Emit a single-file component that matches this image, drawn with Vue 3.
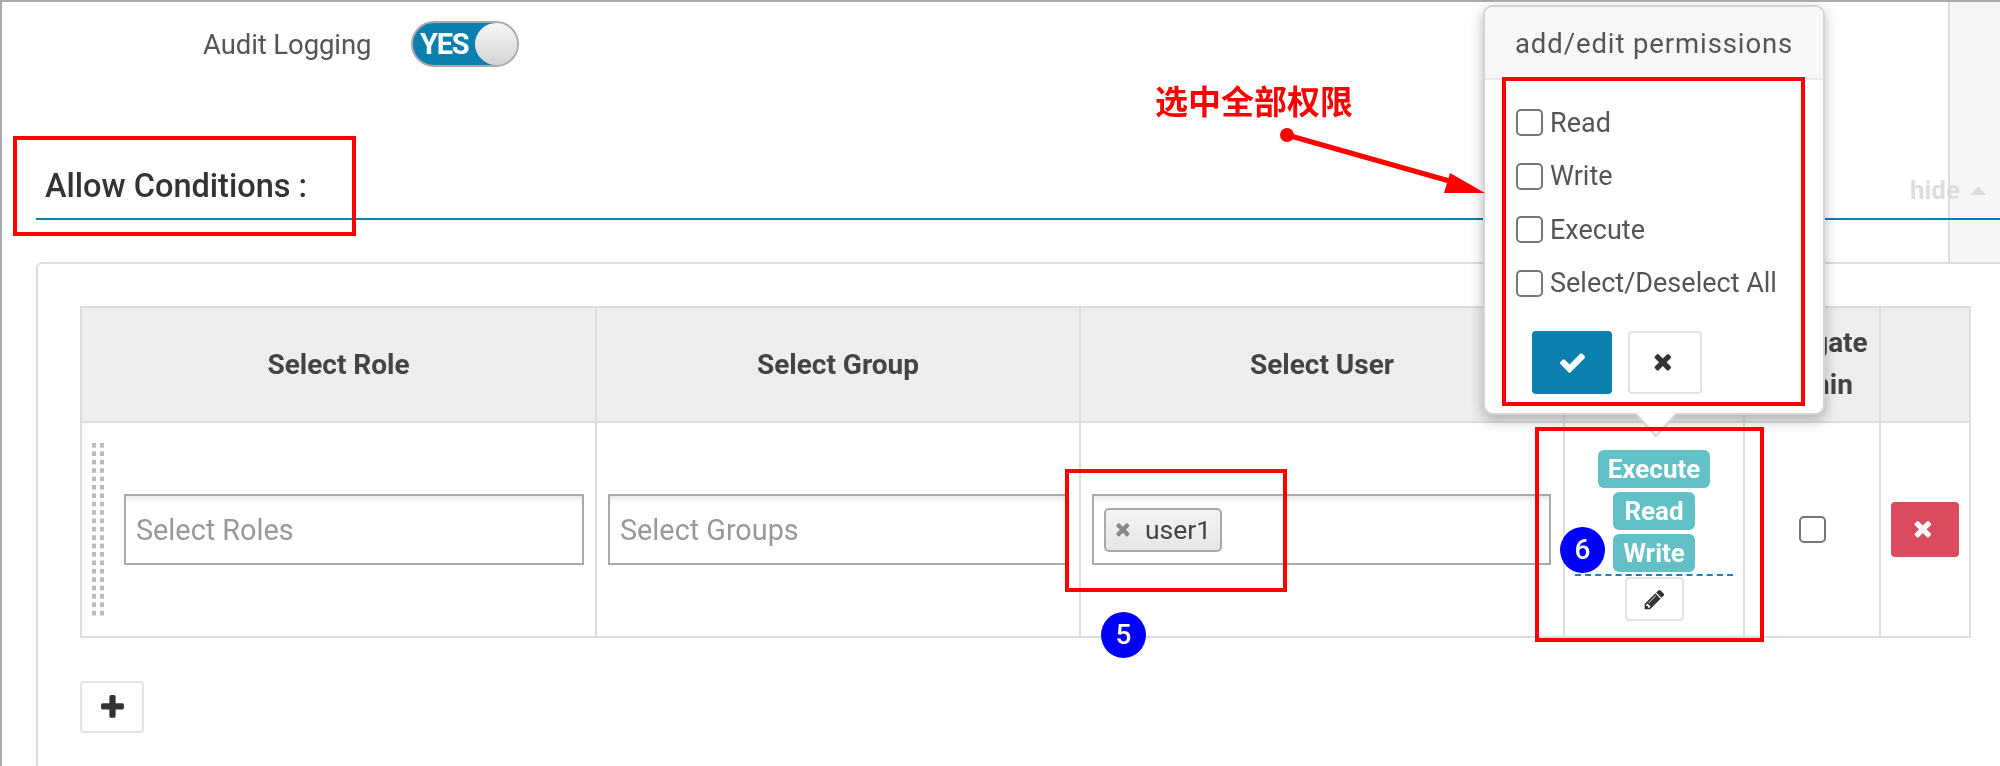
<script setup>
const icons = {
  check: 'M1671 566q0 40-28 68l-724 724-136 136q-28 28-68 28t-68-28l-136-136-362-362q-28-28-28-68t28-68l136-136q28-28 68-28t68 28l294 295 656-657q28-28 68-28t68 28l136 136q28 28 28 68z',
  times: 'M1298 1242q0 40-28 68l-136 136q-28 28-68 28t-68-28l-294-294-294 294q-28 28-68 28t-68-28l-136-136q-28-28-28-68t28-68l294-294-294-294q-28-28-28-68t28-68l136-136q28-28 68-28t68 28l294 294 294-294q28-28 68-28t68 28l136 136q28 28 28 68t-28 68l-294 294 294 294q28 28 28 68z',
  plus: 'M1600 736v192q0 40-28 68t-68 28h-416v416q0 40-28 68t-68 28h-192q-40 0-68-28t-28-68v-416h-416q-40 0-68-28t-28-68v-192q0-40 28-68t68-28h416v-416q0-40 28-68t68-28h192q40 0 68 28t28 68v416h416q40 0 68 28t28 68z',
  pencil: 'M491 1536l91-91-235-235-91 91v107h128v128h107zm523-928q0-22-22-22-10 0-17 7l-542 542q-7 7-7 17 0 22 22 22 10 0 17-7l542-542q7-7 7-17zm-54-192l416 416-832 832h-416v-416zm683 96q0 53-37 90l-166 166-416-416 166-165q36-38 90-38 53 0 91 38l235 234q37 39 37 91z'
}
const perms = ['Read', 'Write', 'Execute', 'Select/Deselect All']
const badges = ['Execute', 'Read', 'Write']
const marks = [
  { x: 13, y: 136, w: 343, h: 100 },
  { x: 1502, y: 77, w: 303, h: 329 },
  { x: 1065, y: 469, w: 222, h: 123 },
  { x: 1535, y: 427, w: 229, h: 215 }
]
const steps = [
  { n: 5, x: 1101, y: 612 },
  { n: 6, x: 1560, y: 527 }
]
const box = m => ({ left: m.x + 'px', top: m.y + 'px', width: m.w + 'px', height: m.h + 'px' })
const pin = s => ({ left: s.x + 'px', top: s.y + 'px' })
</script>

<template>
  <div class="page">
    <div class="strip"></div>

    <div class="audit">
      <span class="audit-label">Audit Logging</span>
      <div class="toggle"><span class="toggle-text">YES</span><span class="knob"></span></div>
    </div>

    <div class="heading">
      <h2>Allow Conditions :</h2>
      <span class="hide">hide <i class="caret"></i></span>
    </div>

    <div class="card">
      <div class="table">
        <div class="th">Select Role</div>
        <div class="th">Select Group</div>
        <div class="th">Select User</div>
        <div class="th">Permissions</div>
        <div class="th two">Delegate<br />Admin</div>
        <div class="th"></div>

        <div class="td first">
          <div class="handle"></div>
          <div class="field placeholder">Select Roles</div>
        </div>
        <div class="td second">
          <div class="field placeholder">Select Groups</div>
        </div>
        <div class="td third">
          <div class="field">
            <span class="chip">
              <svg class="chip-x" viewBox="0 0 1792 1792"><path :d="icons.times" /></svg>
              user1
            </span>
          </div>
        </div>
        <div class="td perms">
          <span v-for="b in badges" :key="b" class="badge">{{ b }}</span>
          <div class="dash"></div>
          <button class="btn edit">
            <svg class="ico-sm" viewBox="0 0 1792 1792"><path :d="icons.pencil" /></svg>
          </button>
        </div>
        <div class="td center"><input type="checkbox" class="cb" /></div>
        <div class="td center">
          <button class="btn remove">
            <svg class="ico-md" viewBox="0 0 1792 1792"><path :d="icons.times" /></svg>
          </button>
        </div>
      </div>

      <button class="btn add">
        <svg class="ico-lg" viewBox="0 0 1792 1792"><path :d="icons.plus" /></svg>
      </button>
    </div>

    <div class="popover">
      <div class="pop-title">add/edit permissions</div>
      <div class="pop-body">
        <label v-for="p in perms" :key="p" class="perm">
          <input type="checkbox" class="cb" />
          <span>{{ p }}</span>
        </label>
        <div class="pop-actions">
          <button class="btn ok">
            <svg class="ico-lg" viewBox="0 0 1792 1792"><path :d="icons.check" /></svg>
          </button>
          <button class="btn cancel">
            <svg class="ico-md" viewBox="0 0 1792 1792"><path :d="icons.times" /></svg>
          </button>
        </div>
      </div>
      <svg class="pop-arrow" viewBox="0 0 44 24" width="44" height="24">
        <path d="M1 0 L22 23 L43 0" fill="#fff" stroke="#d4d4d4" stroke-width="2" />
      </svg>
    </div>

    <div class="note">选中全部权限</div>
    <svg class="pointer" width="2000" height="766" viewBox="0 0 2000 766">
      <circle cx="1287" cy="135" r="7" fill="#f00" />
      <line x1="1287" y1="135" x2="1460" y2="184" stroke="#f00" stroke-width="5" />
      <path d="M1485 193 L1450 173 L1444 193 Z" fill="#f00" />
    </svg>

    <div v-for="(m, i) in marks" :key="i" class="mark" :style="box(m)"></div>
    <div v-for="s in steps" :key="s.n" class="step" :style="pin(s)">{{ s.n }}</div>
  </div>
</template>

<style scoped>
.page {
  position: relative;
  isolation: isolate;
  width: 2000px;
  height: 766px;
  box-sizing: border-box;
  overflow: hidden;
  background: #fff;
  border-top: 2px solid #aaa;
  border-left: 2px solid #aaa;
  padding-left: 34px;
  font-family: Roboto, "Liberation Sans", sans-serif;
  color: #444;
  filter: blur(.45px);
}
.strip {
  position: absolute;
  z-index: -1;
  left: 1946px;
  top: 0;
  width: 52px;
  height: 260px;
  background: #f6f6f6;
  border-left: 2px solid #ddd;
}
.audit {
  display: flex;
  align-items: center;
  height: 46px;
  margin-top: 19px;
  padding-left: 167px;
}
.audit-label {
  width: 208px;
  font-size: 27.5px;
  letter-spacing: -.1px;
  color: #555;
}
.toggle {
  display: flex;
  align-items: center;
  justify-content: space-between;
  box-sizing: border-box;
  width: 108px;
  height: 46px;
  border: 2px solid #aaa;
  border-radius: 23px;
  background: linear-gradient(to right, #0b7fad 80%, #ddd 80%);
}
.toggle-text {
  padding-left: 7px;
  color: #fff;
  font-weight: 700;
  font-size: 29px;
  letter-spacing: -1.2px;
}
.knob {
  width: 42px;
  height: 42px;
  border-radius: 50%;
  background: linear-gradient(to bottom, #f6f6f6, #d4d4d4);
}
.heading {
  display: flex;
  justify-content: space-between;
  align-items: center;
  box-sizing: border-box;
  height: 70px;
  margin-top: 83px;
  padding: 4px 14px 0 9px;
  border-bottom: 2px solid #0b7fad;
}
.heading h2 {
  margin: 0;
  font-size: 32.5px;
  font-weight: 500;
  color: #333;
  line-height: 64px;
}
.hide {
  margin-top: 8px;
  display: flex;
  align-items: center;
  gap: 10px;
  font-size: 26px;
  font-weight: 700;
  color: #ddd;
}
.caret {
  width: 0;
  height: 0;
  border-left: 8px solid transparent;
  border-right: 8px solid transparent;
  border-bottom: 9px solid #ddd;
}
.card {
  margin-top: 42px;
  padding: 42px 0 60px 42px;
  border: 2px solid #ddd;
  border-right: 0;
  border-bottom: 0;
  border-top-left-radius: 6px;
}
.table {
  display: grid;
  grid-template-columns: 515px 484px 484px 180px 136px 90px;
  grid-template-rows: 115px 215px;
  width: 1891px;
  box-sizing: border-box;
  border-top: 2px solid #ddd;
  border-left: 2px solid #ddd;
}
.th, .td {
  box-sizing: border-box;
  border-right: 2px solid #ddd;
  border-bottom: 2px solid #ddd;
}
.th {
  display: flex;
  align-items: center;
  justify-content: center;
  text-align: center;
  background: #eee;
  font-size: 28px;
  font-weight: 700;
  color: #444;
  padding-bottom: 1px;
}
.th.two { line-height: 42px; }
.td {
  display: flex;
  align-items: center;
}
.first { padding: 0 11px 0 10px; gap: 19px; }
.second { padding: 0 10px 0 11px; }
.third { padding: 0 12px 0 11px; }
.center { justify-content: center; }
.handle {
  flex: none;
  width: 13px;
  height: 173px;
  background-image: linear-gradient(to right, #bbb 4px, transparent 4px);
  background-size: 8px 100%;
  -webkit-mask-image: linear-gradient(to bottom, #000 50%, transparent 50%);
  mask-image: linear-gradient(to bottom, #000 50%, transparent 50%);
  -webkit-mask-size: 100% 8.4px;
  mask-size: 100% 8.4px;
}
.field {
  flex: 1;
  display: flex;
  align-items: center;
  box-sizing: border-box;
  height: 71px;
  padding: 0 10px;
  border: 2px solid #aaa;
  box-shadow: inset 0 8px 6px -6px #e2e2e2;
  font-size: 28.8px;
}
.placeholder { color: #999; }
.chip {
  display: flex;
  align-items: center;
  box-sizing: border-box;
  width: 118px;
  height: 44px;
  padding-left: 9px;
  gap: 10px;
  border: 2px solid #aaa;
  border-radius: 5px;
  background: linear-gradient(to bottom, #f4f4f4, #e6e6e6);
  color: #444;
  font-size: 26.5px;
}
.chip-x { width: 20px; height: 20px; fill: #888; }
.perms {
  flex-direction: column;
  gap: 4px;
  padding-top: 27px;
}
.badge {
  box-sizing: border-box;
  display: flex;
  align-items: center;
  justify-content: center;
  height: 38px;
  min-width: 82px;
  padding: 0 10px;
  border-radius: 6px;
  background: #62c0c7;
  color: #fff;
  font-size: 26px;
  font-weight: 700;
}
.dash {
  width: 158px;
  margin-top: -2px;
  border-top: 2px dashed #0b86c9;
}
.btn {
  display: flex;
  align-items: center;
  justify-content: center;
  box-sizing: border-box;
  padding: 0;
  border: 2px solid #e2e2e2;
  border-radius: 4px;
  background: #fff;
  fill: #333;
}
.edit { width: 59px; height: 44px; margin-top: -3px; }
.remove {
  width: 68px;
  height: 55px;
  background: #dc4a5f;
  border-color: #dc4a5f;
  fill: #fff;
}
.add { width: 64px; height: 52px; margin-top: 43px; }
.ico-sm { width: 23px; height: 23px; }
.ico-md { width: 25px; height: 25px; }
.ico-lg { width: 29px; height: 29px; }
.cb {
  appearance: none;
  flex: none;
  box-sizing: border-box;
  width: 27px;
  height: 27px;
  margin: 0;
  background: #fff;
  border: 2px solid #767676;
  border-radius: 5px;
}
.popover {
  position: absolute;
  z-index: 2;
  left: 1481px;
  top: 3px;
  box-sizing: border-box;
  width: 342px;
  height: 410px;
  background: #fff;
  border: 2px solid #d4d4d4;
  border-radius: 10px;
  box-shadow: 0 5px 14px rgba(0, 0, 0, .28);
}
.pop-title {
  box-sizing: border-box;
  height: 73px;
  padding-left: 30px;
  line-height: 74px;
  background: #f7f7f7;
  border-bottom: 2px solid #ebebeb;
  border-radius: 8px 8px 0 0;
  font-size: 27.5px;
  letter-spacing: .9px;
  color: #555;
}
.pop-body { padding: 29px 0 0 31px; }
.perm {
  display: flex;
  align-items: center;
  gap: 7px;
  height: 27px;
  margin-bottom: 26.5px;
  font-size: 27px;
  color: #555;
}
.pop-actions {
  display: flex;
  gap: 16px;
  margin: 34.5px 0 0 16px;
}
.ok { width: 80px; height: 63px; background: #0b7fad; border-color: #0b7fad; fill: #fff; }
.cancel { width: 74px; height: 63px; }
.pop-arrow {
  position: absolute;
  left: 149px;
  top: 406px;
  overflow: visible;
}
.note {
  position: absolute;
  z-index: 3;
  left: 1153px;
  top: 80px;
  color: #f00;
  font-family: "Noto Sans CJK SC", sans-serif;
  font-size: 33px;
  font-weight: 700;
  line-height: 36px;
  white-space: nowrap;
}
.pointer {
  position: absolute;
  z-index: 3;
  left: -2px;
  top: -2px;
  pointer-events: none;
}
.mark {
  position: absolute;
  z-index: 4;
  box-sizing: border-box;
  margin: -2px 0 0 -2px;
  border: 4px solid #f00;
}
.step {
  position: absolute;
  z-index: 5;
  width: 45px;
  height: 46px;
  margin: -2px 0 0 -2px;
  border-radius: 50%;
  background: #00f;
  color: #fff;
  text-align: center;
  line-height: 46px;
  font-size: 28px;
  font-weight: 500;
}
</style>

<style>
html, body { margin: 0; overflow: hidden; }
</style>
